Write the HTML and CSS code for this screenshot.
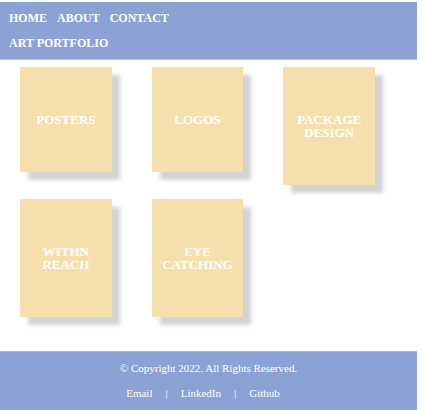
FILE: index.html
```html
<!DOCTYPE html>
<html lang="en">
<head>
<meta charset="utf-8">
<title>Art Portfolio</title>
<link rel="stylesheet" href="styles.css">
</head>
<body>
<header class="site-header">
  <nav class="nav">
    <a href="#">HOME</a>
    <a href="#">ABOUT</a>
    <a href="#">CONTACT</a>
  </nav>
  <h1 class="title">ART PORTFOLIO</h1>
</header>
<main class="gallery">
  <a class="card" href="#">POSTERS</a>
  <a class="card" href="#">LOGOS</a>
  <a class="card" href="#">PACKAGE DESIGN</a>
  <a class="card" href="#">WITHN REACH</a>
  <a class="card" href="#">EYE CATCHING</a>
</main>
<footer class="site-footer">
  <p>© Copyright 2022. All Rights Reserved.</p>
  <p class="links"><a href="#">Email</a><span>|</span><a href="#">LinkedIn</a><span>|</span><a href="#">Github</a></p>
</footer>
</body>
</html>
```
FILE: styles.css
```css
* {
  box-sizing: border-box;
}

body {
  display: flex;
  flex-direction: column;
  min-height: 100vh;
  margin: 0;
  padding: 2px 5px 0 0;
  background: #fff;
  font-family: "Liberation Serif", "Times New Roman", serif;
}

a {
  color: inherit;
  text-decoration: none;
}

.site-header {
  padding: 9px 9px 8px;
  background: #8da2d4;
  border-bottom: 1px solid #b5c2e4;
  color: #fff;
  font-size: 12px;
  font-weight: bold;
  line-height: 15px;
}

.nav {
  display: flex;
  gap: 10px;
}

.title {
  margin: 10px 0 0;
  font-size: inherit;
  line-height: inherit;
}

.gallery {
  display: grid;
  grid-template-columns: repeat(3, 1fr);
  align-items: start;
  flex: 1;
  align-content: start;
  gap: 14px 40px;
  padding: 7px 42px 33px 20px;
}

.card {
  padding: 46px 8px;
  background: #f5dfad;
  box-shadow: 8px 8px 4px lightgray;
  color: #fff;
  font-size: 13px;
  font-weight: bold;
  line-height: 13px;
  text-align: center;
}

.site-footer {
  padding: 10px 0;
  background: #8da2d4;
  border-top: 1px solid #a5b5da;
  color: #fff;
  font-size: 11px;
  line-height: 13px;
  text-align: center;
}

.site-footer p {
  margin: 0;
}

.site-footer .links {
  display: flex;
  justify-content: center;
  gap: 13px;
  margin-top: 12px;
  padding-right: 11px;
}
```
